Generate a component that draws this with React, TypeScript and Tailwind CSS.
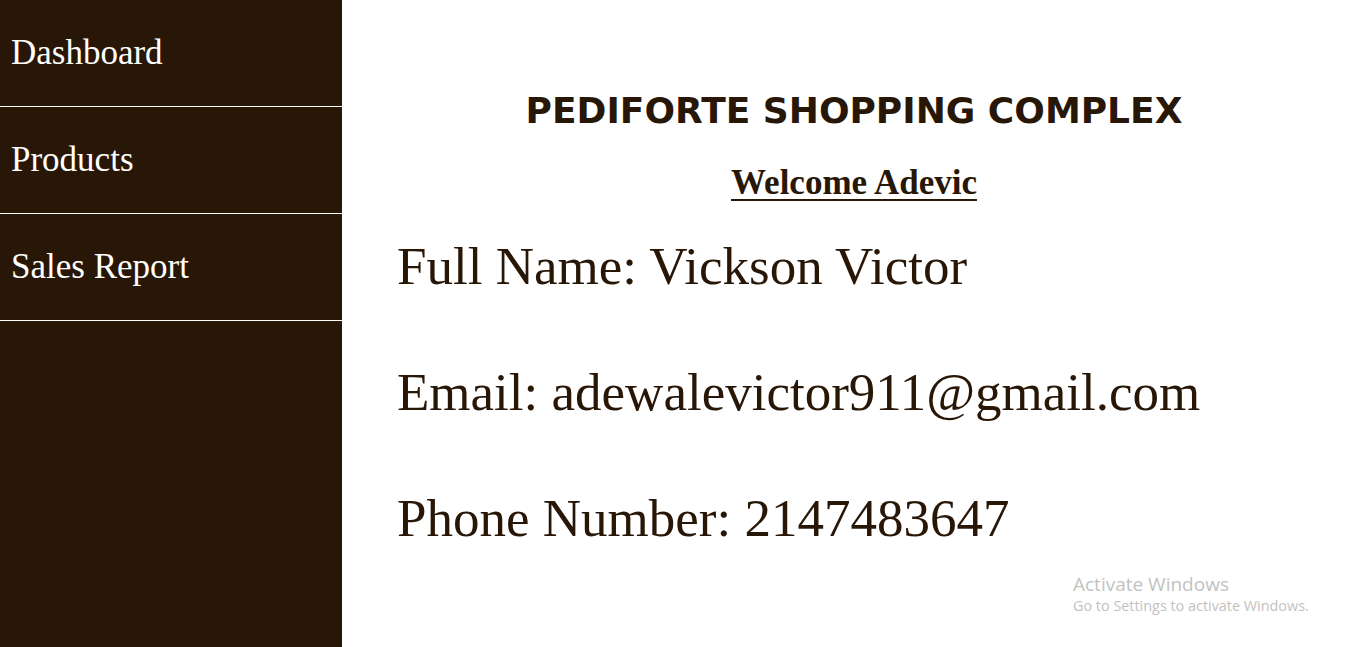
const navItems = ["Dashboard", "Products", "Sales Report"];

const profile = [
  { label: "Full Name", value: "Vickson Victor" },
  { label: "Email", value: "adewalevictor911@gmail.com" },
  { label: "Phone Number", value: "2147483647" },
];

const App = () => {
  return (
    <div className="relative flex h-screen w-full overflow-hidden bg-white">
      <aside className="flex h-full w-[342px] shrink-0 flex-col bg-[#281706]">
        {navItems.map((item) => (
          <a
            key={item}
            href="#"
            className="flex h-[107px] items-center border-b border-white pl-[11px] font-['Liberation_Serif',serif] text-[35px] text-white"
          >
            {item}
          </a>
        ))}
      </aside>

      <main className="flex flex-1 flex-col text-[#281706]">
        <h1 className="mt-[91px] text-center font-['DejaVu_Sans',sans-serif] text-[36px] leading-[40px] font-bold">
          PEDIFORTE SHOPPING COMPLEX
        </h1>
        <h2 className="mt-[33px] text-center font-['Liberation_Serif',serif] text-[35px] leading-[38px] font-bold underline decoration-2 underline-offset-[5px]">
          Welcome Adevic
        </h2>
        <div className="mt-[34px] flex flex-col gap-[66px] pl-[55px] font-['Liberation_Serif',serif] text-[53px] leading-[60px]">
          {profile.map((row) => (
            <p key={row.label}>
              {row.label}: {row.value}
            </p>
          ))}
        </div>
      </main>

      <div className="absolute top-[572px] left-[1073px] font-['Open_Sans',sans-serif] text-[#c2c2c2]">
        <div className="text-[19px] leading-[24px]">Activate Windows</div>
        <div className="text-[14.4px] leading-[20px]">Go to Settings to activate Windows.</div>
      </div>
    </div>
  );
};

export default App;
